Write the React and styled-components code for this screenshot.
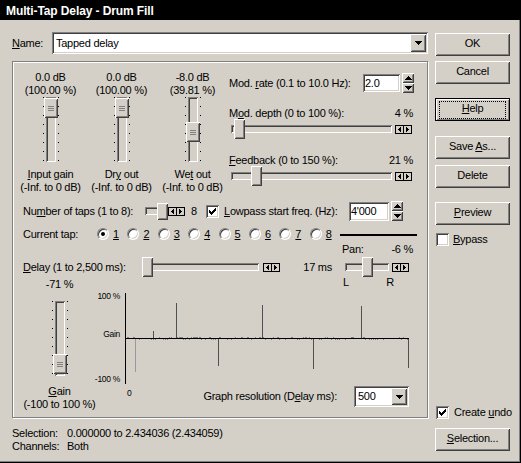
import React from "react";
import styled, { createGlobalStyle, css } from "styled-components";

const FACE = "#d4d0c8";

const GlobalStyle = createGlobalStyle`
  html, body { margin: 0; padding: 0; background: ${FACE}; }
  *, *::before, *::after { box-sizing: border-box; }
`;

const raised = css`
  background: ${FACE};
  box-shadow: inset 1px 1px #fff, inset -1px -1px #404040, inset 2px 2px ${FACE}, inset -2px -2px #808080;
`;
const sunken = css`
  box-shadow: inset 1px 1px #808080, inset -1px -1px #fff, inset 2px 2px #404040, inset -2px -2px ${FACE};
`;

const Window = styled.div`
  width: 521px;
  height: 463px;
  background: ${FACE};
  box-shadow: inset -1px -1px #000, inset -2px -2px #808080;
  font-family: "Liberation Sans", Arial, sans-serif;
  font-size: 11px;
  letter-spacing: -0.25px;
  color: #000;
  display: flex;
  flex-direction: column;
  overflow: hidden;
`;

const TitleBar = styled.div`
  height: 20px;
  flex: none;
  padding: 3px 0 0 6px;
  line-height: 17px;
  background: #000;
  color: #fff;
  font-weight: bold;
  font-size: 12px;
  letter-spacing: -0.1px;
  white-space: nowrap;
`;

const Body = styled.div`
  display: flex;
  padding: 12px 0 0 12px;
`;

const LeftCol = styled.div`
  width: 416px;
  flex: none;
  display: flex;
  flex-direction: column;
`;

const RightCol = styled.div`
  width: 75px;
  height: 419px;
  flex: none;
  margin-left: 7px;
  display: flex;
  flex-direction: column;
`;

const NameRow = styled.div`
  display: flex;
  align-items: center;
  height: 22px;
`;

const Label = styled.span`
  flex: none;
  width: ${(p) => (p.$w ? `${p.$w}px` : "auto")};
  padding-left: ${(p) => p.$pl || 0}px;
  line-height: 13px;
  white-space: nowrap;
  text-align: ${(p) => p.$align || "left"};
`;

const ComboBox = styled.div`
  flex: none;
  width: ${(p) => p.$w}px;
  height: ${(p) => p.$h}px;
  background: #fff;
  ${sunken};
  display: flex;
  align-items: stretch;
  padding: 2px;
  margin-left: ${(p) => p.$ml || 0}px;
  margin-right: ${(p) => p.$mr || 0}px;
`;

const ComboText = styled.span`
  flex: 1;
  display: flex;
  align-items: center;
  padding-left: 2px;
  line-height: 13px;
  white-space: nowrap;
`;

const DropButton = styled.span`
  width: 16px;
  flex: none;
  ${raised};
  display: flex;
  align-items: center;
  justify-content: center;
`;

const Group = styled.div`
  margin-top: 7px;
  height: 357px;
  border: 1px solid #808080;
  box-shadow: inset 1px 1px #fff, 1px 1px #fff;
  display: flex;
  flex-direction: column;
`;

const TopSection = styled.div`
  display: flex;
  height: 134px;
  flex: none;
  padding-left: 2px;
`;

const VCol = styled.div`
  width: 71px;
  flex: none;
  display: flex;
  flex-direction: column;
  align-items: center;
  padding-top: 9px;
`;

const TextBlock = styled.div`
  margin-top: ${(p) => p.$mt || 0}px;
  line-height: 13px;
  text-align: center;
  white-space: nowrap;
`;

const VTrack = styled.div`
  position: relative;
  flex: none;
  width: 16px;
  height: ${(p) => p.$h}px;
  display: flex;
  justify-content: center;
  background:
    repeating-linear-gradient(to bottom, #000 0 1px, transparent 1px 9px) left top / 1px 100% no-repeat,
    repeating-linear-gradient(to bottom, #000 0 1px, transparent 1px 9px) right top / 1px 100% no-repeat;
`;

const VChannel = styled.div`
  width: 10px;
  height: 100%;
  background: ${FACE};
  ${sunken};
`;

const VThumb = styled.div`
  position: absolute;
  left: 1px;
  top: ${(p) => p.$top}px;
  width: 14px;
  height: 20px;
  ${raised};
  display: flex;
  align-items: center;
  justify-content: center;
`;

const Grip = styled.span`
  width: 6px;
  height: 5px;
  background: repeating-linear-gradient(to bottom, #808080 0 1px, transparent 1px 2px);
`;

const HTrack = styled.div`
  position: relative;
  flex: none;
  width: ${(p) => p.$w}px;
  height: ${(p) => p.$h}px;
  display: flex;
  align-items: center;
`;

const HChannel = styled.div`
  width: 100%;
  height: 8px;
  background: ${FACE};
  ${sunken};
`;

const HThumb = styled.div`
  position: absolute;
  top: 0;
  left: ${(p) => p.$left}px;
  width: 11px;
  height: 100%;
  ${raised};
`;

const RightPanel = styled.div`
  width: 185px;
  flex: none;
  margin-left: 1px;
  padding-top: 11px;
  display: flex;
  flex-direction: column;
`;

const Row = styled.div`
  display: flex;
  align-items: center;
  flex: none;
  height: ${(p) => p.$h || 20}px;
  margin-top: ${(p) => p.$mt || 0}px;
  padding-left: ${(p) => p.$pl || 0}px;
  grid-column: ${(p) => p.$col || "auto"};
  grid-row: ${(p) => p.$row || "auto"};
`;

const SliderHead = styled.div`
  display: flex;
  justify-content: space-between;
  line-height: 12px;
  margin-top: ${(p) => p.$mt || 0}px;
  padding-right: 1px;
  white-space: nowrap;
`;

const EditBox = styled.div`
  flex: none;
  width: ${(p) => p.$w}px;
  height: ${(p) => p.$h}px;
  background: #fff;
  ${sunken};
  display: flex;
  align-items: center;
  padding-left: 2px;
  line-height: 13px;
`;

const Spinner = styled.div`
  flex: none;
  width: 12px;
  height: 20px;
  margin-left: 2px;
  display: flex;
  flex-direction: column;
`;

const SpinBtn = styled.span`
  flex: 1;
  ${raised};
  display: flex;
  align-items: center;
  justify-content: center;
`;

const Arrows = styled.svg`
  flex: none;
  margin-left: ${(p) => p.$ml || 0}px;
`;

const CheckBox = styled.span`
  flex: none;
  width: 13px;
  height: 13px;
  background: #fff;
  ${sunken};
  display: flex;
  align-items: center;
  justify-content: center;
  margin-left: ${(p) => p.$ml || 0}px;
`;

const CheckText = styled.span`
  margin-left: ${(p) => p.$ml || 4}px;
  line-height: 13px;
  white-space: nowrap;
`;

const RadioItem = styled.span`
  flex: none;
  width: 30.4px;
  display: flex;
  align-items: center;
`;

const Radio = styled.span`
  flex: none;
  width: 12px;
  height: 12px;
  border-radius: 50%;
  background: #fff;
  border: 1px solid;
  border-color: #808080 #fff #fff #808080;
  box-shadow: inset 1px 1px #404040, inset -1px -1px ${FACE};
  display: flex;
  align-items: center;
  justify-content: center;
  &::after {
    content: "";
    width: 4px;
    height: 4px;
    border-radius: 50%;
    background: #000;
    display: ${(p) => (p.$on ? "block" : "none")};
  }
`;

const RadioText = styled.span`
  margin-left: 4px;
  line-height: 13px;
  text-decoration: underline;
`;

const Separator = styled.span`
  flex: none;
  width: 77px;
  height: 2px;
  margin-top: 2px;
  background: #000;
`;

const PanGrid = styled.div`
  display: grid;
  grid-template-columns: 327px 76px;
  grid-template-rows: 14px 20px 13px;
  margin-top: 2px;
  flex: none;
`;

const PanHead = styled.div`
  grid-column: 2;
  grid-row: 1;
  display: flex;
  justify-content: space-between;
  line-height: 12px;
  padding: 0 3px 0 2px;
  white-space: nowrap;
`;

const GainValue = styled.div`
  grid-column: 1;
  grid-row: 3;
  width: 75px;
  margin-left: 9px;
  padding-top: 2px;
  line-height: 11px;
  text-align: center;
`;

const LRRow = styled.div`
  grid-column: 2;
  grid-row: 3;
  display: flex;
  justify-content: space-between;
  padding: 0 22px 0 3px;
  line-height: 11px;
`;

const BottomSection = styled.div`
  flex: 1;
  display: flex;
`;

const GainCol = styled.div`
  width: 75px;
  flex: none;
  margin-left: 9px;
  padding-top: 11px;
  display: flex;
  flex-direction: column;
  align-items: center;
`;

const GraphBlock = styled.div`
  width: 318px;
  flex: none;
  display: flex;
  flex-direction: column;
`;

const ChartSvg = styled.svg`
  display: block;
  flex: none;
  overflow: visible;
  font-family: "Liberation Sans", Arial, sans-serif;
  letter-spacing: -0.3px;
`;

const ZeroLabel = styled.span`
  align-self: flex-start;
  margin-top: 3px;
  padding-left: 30px;
  font-size: 8.5px;
  line-height: 9px;
  letter-spacing: 0;
`;

const Spacer = styled.span`
  flex: 1;
`;

const Status = styled.div`
  margin-top: 9px;
  display: grid;
  grid-template-columns: 55px auto;
  line-height: 13px;
  white-space: nowrap;
`;

const Button = styled.div`
  flex: none;
  height: 23px;
  margin-top: ${(p) => p.$mt || 0}px;
  padding: 3px 4px 2px;
  display: flex;
  ${raised};
  ${(p) =>
    p.$default &&
    css`
      box-shadow: inset 0 0 0 1px #000, inset 2px 2px #fff, inset -2px -2px #808080;
    `}
`;

const ButtonFace = styled.span`
  flex: 1;
  display: flex;
  align-items: center;
  justify-content: center;
  padding-bottom: 3px;
  border: 1px ${(p) => (p.$focus ? "dotted #000" : "solid transparent")};
  line-height: 13px;
  white-space: nowrap;
`;

const CheckRow = styled.div`
  display: flex;
  align-items: center;
  flex: none;
  height: 13px;
  margin-top: ${(p) => p.$mt || 0}px;
  padding-left: 1px;
`;

function DownTri() {
  return (
    <svg width="7" height="4" viewBox="0 0 7 4" shapeRendering="crispEdges">
      <path d="M0 0h7v1H0zM1 1h5v1H1zM2 2h3v1H2zM3 3h1v1H3z" fill="#000" />
    </svg>
  );
}

function UpTri() {
  return (
    <svg width="7" height="4" viewBox="0 0 7 4" shapeRendering="crispEdges">
      <path d="M3 0h1v1H3zM2 1h3v1H2zM1 2h5v1H1zM0 3h7v1H0z" fill="#000" />
    </svg>
  );
}

function CheckMark() {
  return (
    <svg width="7" height="7" viewBox="0 0 7 7" shapeRendering="crispEdges">
      <path
        d="M0 2h1v3H0zM1 3h1v3H1zM2 4h1v3H2zM3 3h1v3H3zM4 2h1v3H4zM5 1h1v3H5zM6 0h1v3H6z"
        fill="#000"
      />
    </svg>
  );
}

function ArrowPair({ ml }) {
  return (
    <Arrows $ml={ml} width="17" height="9" viewBox="0 0 17 9" shapeRendering="crispEdges">
      <rect x="0" y="0" width="17" height="9" fill="#000" />
      <rect x="1" y="1" width="7" height="7" fill={FACE} />
      <rect x="9" y="1" width="7" height="7" fill={FACE} />
      <path d="M3 4h1v1H3zM4 3h1v3H4zM5 2h1v5H5z" fill="#000" />
      <path d="M11 2h1v5h-1zM12 3h1v3h-1zM13 4h1v1h-1z" fill="#000" />
    </Arrows>
  );
}

function Spin() {
  return (
    <Spinner>
      <SpinBtn>
        <UpTri />
      </SpinBtn>
      <SpinBtn>
        <DownTri />
      </SpinBtn>
    </Spinner>
  );
}

function VSlider({ h, top }) {
  return (
    <VTrack $h={h}>
      <VChannel />
      <VThumb $top={top}>
        <Grip />
      </VThumb>
    </VTrack>
  );
}

function HSlider({ w, h = 20, left }) {
  return (
    <HTrack $w={w} $h={h}>
      <HChannel />
      <HThumb $left={left} />
    </HTrack>
  );
}

function Check({ on, ml }) {
  return <CheckBox $ml={ml}>{on ? <CheckMark /> : null}</CheckBox>;
}

function PushButton({ children, mt, isDefault }) {
  return (
    <Button $mt={mt} $default={isDefault}>
      <ButtonFace $focus={isDefault}>
        <span>{children}</span>
      </ButtonFace>
    </Button>
  );
}

function DelayGraph() {
  const spikes = [
    { x: 38, y: 82, c: "#9a9a9a" },
    { x: 56, y: 41, c: "#505050" },
    { x: 79, y: 13, c: "#505050" },
    { x: 121, y: 76, c: "#505050" },
    { x: 165, y: 15, c: "#505050" },
    { x: 216, y: 79, c: "#505050" },
    { x: 264, y: 16, c: "#505050" },
    { x: 311, y: 78, c: "#505050" },
  ];
  const noise = [];
  for (let x = 30; x < 311; x += 2) {
    const r = Math.abs(Math.sin(x * 12.9898) * 43758.5453) % 1;
    if (r < 0.45) continue;
    const up = r > 0.72;
    noise.push(
      <rect key={x} x={x} y={up ? 47 : 49} width={r > 0.9 ? 2 : 1} height="1" fill="#808080" />
    );
  }
  return (
    <ChartSvg width="318" height="96" viewBox="0 0 318 96">
      <g shapeRendering="crispEdges">
        {noise}
        {spikes.map((s) =>
          s.y < 48 ? (
            <rect key={s.x} x={s.x} y={s.y} width="1" height={48 - s.y} fill={s.c} />
          ) : (
            <rect key={s.x} x={s.x} y="49" width="1" height={s.y - 49} fill={s.c} />
          )
        )}
        <rect x="28" y="48" width="284" height="1" fill="#000" />
        <rect x="28" y="3" width="1" height="91" fill="#000" />
      </g>
      <text x="23" y="9" textAnchor="end" fontSize="8.5" fill="#000">100 %</text>
      <text x="23" y="47" textAnchor="end" fontSize="8.5" fill="#000">Gain</text>
      <text x="23" y="92" textAnchor="end" fontSize="8.5" fill="#000">-100 %</text>
    </ChartSvg>
  );
}

export default function App() {
  return (
    <>
      <GlobalStyle />
      <Window>
        <TitleBar>Multi-Tap Delay - Drum Fill</TitleBar>
        <Body>
          <LeftCol>
            <NameRow>
              <Label $w={40}>
                <u>N</u>ame:
              </Label>
              <ComboBox $w={376} $h={22}>
                <ComboText>Tapped delay</ComboText>
                <DropButton>
                  <DownTri />
                </DropButton>
              </ComboBox>
            </NameRow>

            <Group>
              <TopSection>
                <VCol>
                  <TextBlock>
                    0.0 dB
                    <br />
                    (100.00 %)
                  </TextBlock>
                  <VSlider h={65} top={1} />
                  <TextBlock $mt={6}>
                    <u>I</u>nput gain
                    <br />
                    (-Inf. to 0 dB)
                  </TextBlock>
                </VCol>
                <VCol>
                  <TextBlock>
                    0.0 dB
                    <br />
                    (100.00 %)
                  </TextBlock>
                  <VSlider h={65} top={1} />
                  <TextBlock $mt={6}>
                    Dr<u>y</u> out
                    <br />
                    (-Inf. to 0 dB)
                  </TextBlock>
                </VCol>
                <VCol>
                  <TextBlock>
                    -8.0 dB
                    <br />
                    (39.81 %)
                  </TextBlock>
                  <VSlider h={65} top={25} />
                  <TextBlock $mt={6}>
                    We<u>t</u> out
                    <br />
                    (-Inf. to 0 dB)
                  </TextBlock>
                </VCol>

                <RightPanel>
                  <Row $h={20}>
                    <Label $w={134}>
                      Mod. <u>r</u>ate (0.1 to 10.0 Hz):
                    </Label>
                    <EditBox $w={37} $h={18}>2.0</EditBox>
                    <Spin />
                  </Row>
                  <SliderHead $mt={14}>
                    <span>
                      M<u>o</u>d. depth (0 to 100 %):
                    </span>
                    <span>4 %</span>
                  </SliderHead>
                  <Row $h={20} $pl={2}>
                    <HSlider w={161} left={3} />
                    <ArrowPair ml={3} />
                  </Row>
                  <SliderHead $mt={15}>
                    <span>
                      <u>F</u>eedback (0 to 150 %):
                    </span>
                    <span>21 %</span>
                  </SliderHead>
                  <Row $h={20} $pl={2}>
                    <HSlider w={161} left={20} />
                    <ArrowPair ml={3} />
                  </Row>
                </RightPanel>
              </TopSection>

              <Row $h={20} $mt={5} $pl={10}>
                <Label $w={122}>
                  Nu<u>m</u>ber of taps (1 to 8):
                </Label>
                <HSlider w={23} h={17} left={12} />
                <ArrowPair />
                <Label $w={21} $pl={6}>8</Label>
                <Check on />
                <Label $w={130} $pl={5}>
                  <u>L</u>owpass start freq. (Hz):
                </Label>
                <EditBox $w={40} $h={19}>4'000</EditBox>
                <Spin />
              </Row>

              <Row $h={14} $mt={6} $pl={10}>
                <Label $w={74}>Current tap:</Label>
                {[1, 2, 3, 4, 5, 6, 7, 8].map((n) => (
                  <RadioItem key={n}>
                    <Radio $on={n === 1} />
                    <RadioText>{n}</RadioText>
                  </RadioItem>
                ))}
                <Separator />
              </Row>

              <PanGrid>
                <PanHead>
                  <span>Pan:</span>
                  <span>-6 %</span>
                </PanHead>
                <Row $h={20} $pl={10} $col={1} $row={2}>
                  <Label $w={119}>
                    <u>D</u>elay (1 to 2,500 ms):
                  </Label>
                  <HSlider w={117} left={0} />
                  <ArrowPair ml={4} />
                  <Label $w={52} $align="right">17 ms</Label>
                </Row>
                <Row $h={20} $pl={5} $col={2} $row={2}>
                  <HSlider w={44} left={17} />
                  <ArrowPair ml={3} />
                </Row>
                <GainValue>-71 %</GainValue>
                <LRRow>
                  <span>L</span>
                  <span>R</span>
                </LRRow>
              </PanGrid>

              <BottomSection>
                <GainCol>
                  <VSlider h={75} top={53} />
                  <TextBlock $mt={9}>
                    <u>G</u>ain
                    <br />
                    (-100 to 100 %)
                  </TextBlock>
                </GainCol>
                <GraphBlock>
                  <DelayGraph />
                  <Row $h={21}>
                    <ZeroLabel>0</ZeroLabel>
                    <Spacer />
                    <Label>
                      Graph resolution (D<u>e</u>lay ms):
                    </Label>
                    <ComboBox $w={55} $h={21} $ml={17} $mr={6}>
                      <ComboText>500</ComboText>
                      <DropButton>
                        <DownTri />
                      </DropButton>
                    </ComboBox>
                  </Row>
                </GraphBlock>
              </BottomSection>
            </Group>

            <Status>
              <span>Selection:</span>
              <span>0.000000 to 2.434036 (2.434059)</span>
              <span>Channels:</span>
              <span>Both</span>
            </Status>
          </LeftCol>

          <RightCol>
            <PushButton mt={1}>OK</PushButton>
            <PushButton mt={5}>Cancel</PushButton>
            <PushButton mt={14} isDefault>
              <u>H</u>elp
            </PushButton>
            <PushButton mt={15}>
              Save <u>A</u>s...
            </PushButton>
            <PushButton mt={6}>Delete</PushButton>
            <PushButton mt={14}>
              <u>P</u>review
            </PushButton>
            <CheckRow $mt={8}>
              <Check />
              <CheckText>
                <u>B</u>ypass
              </CheckText>
            </CheckRow>
            <Spacer />
            <CheckRow>
              <Check on />
              <CheckText $ml={5}>
                Create <u>u</u>ndo
              </CheckText>
            </CheckRow>
            <PushButton mt={9}>
              <u>S</u>election...
            </PushButton>
          </RightCol>
        </Body>
      </Window>
    </>
  );
}
